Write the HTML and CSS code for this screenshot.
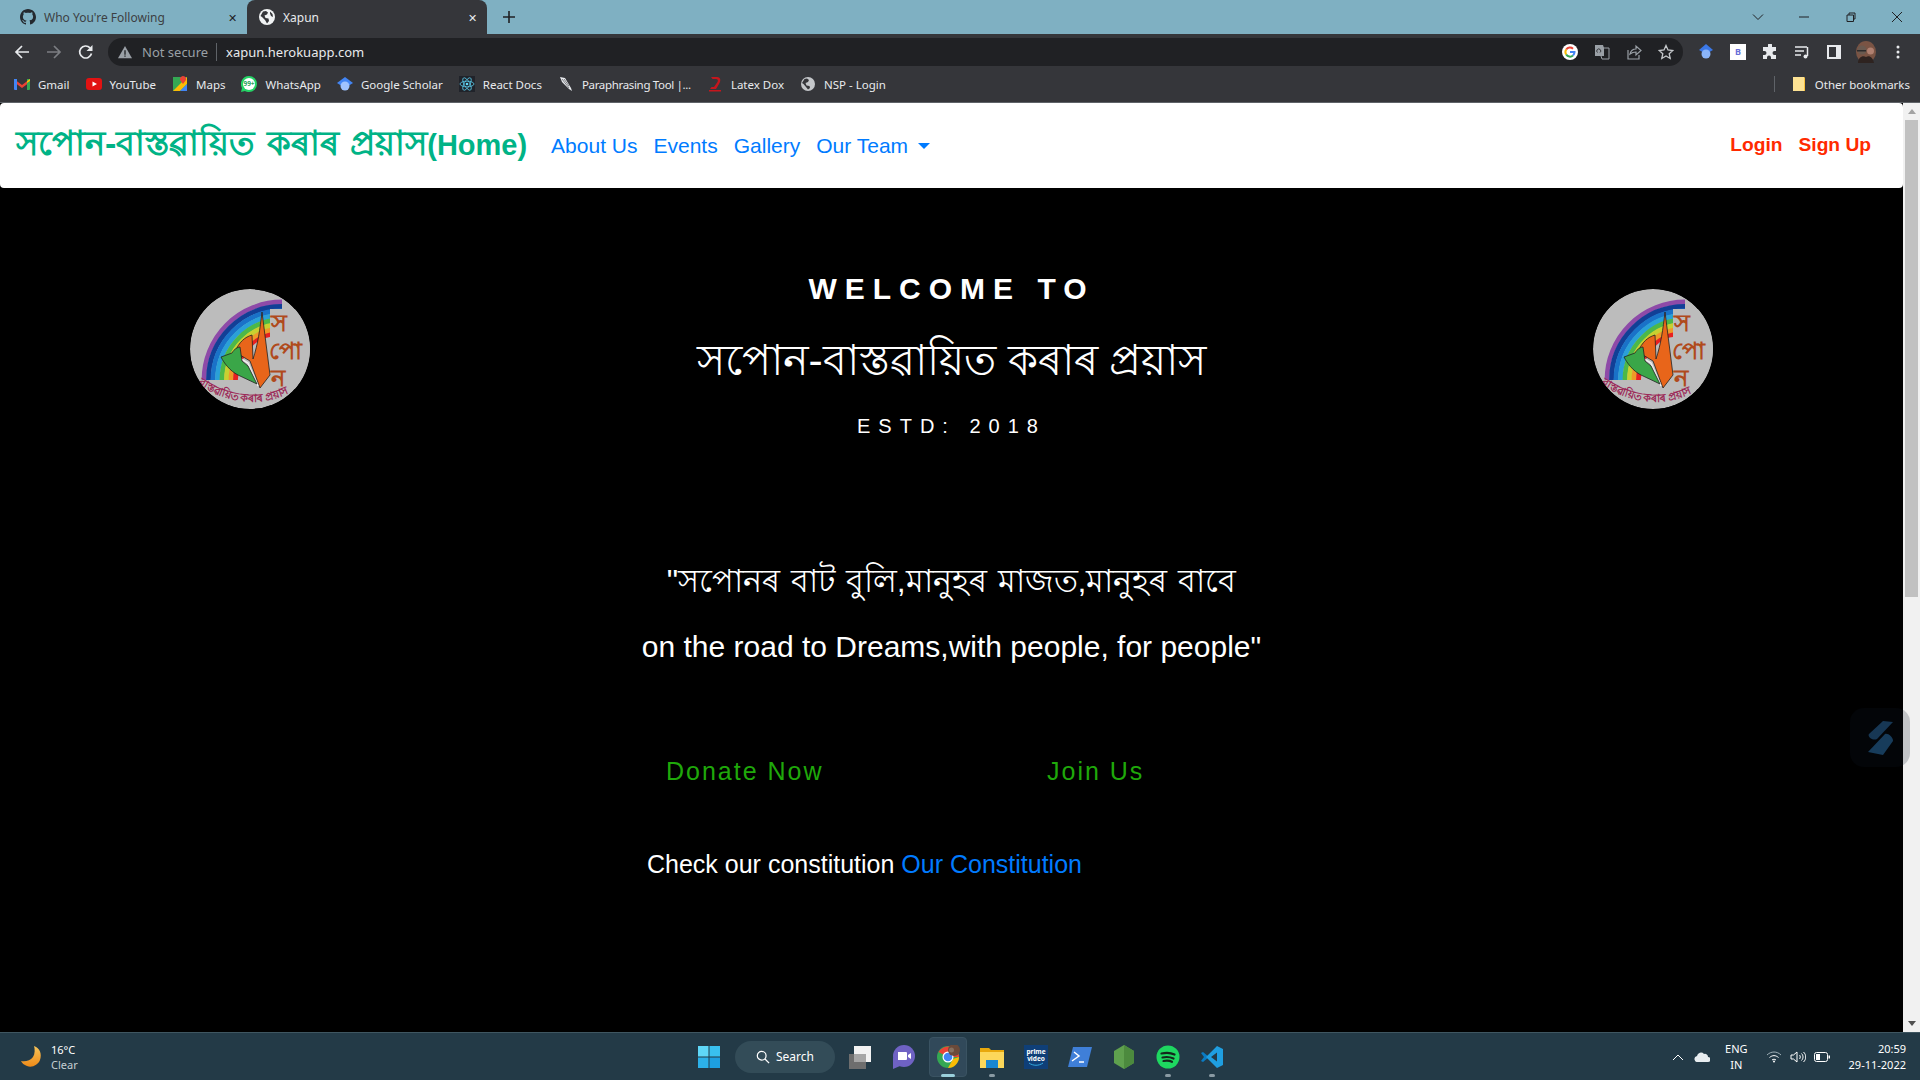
FILE: index.html
```html
<!DOCTYPE html>
<html lang="en">
<head>
  <meta charset="UTF-8">
  <title>Xapun</title>
  <link rel="stylesheet" href="styles.css">
</head>
<body>
  <!-- browser window -->
  <div class="tabstrip">
    <div class="tab">
      <svg class="tab-icon" viewBox="0 0 16 16"><path fill="#24292f" d="M8 0C3.600 0 0 3.600 0 8c0 3.500 2.300 6.500 5.500 7.600.4.100.5-.2.5-.4v-1.400c-2.200.5-2.700-1-2.700-1-.4-.9-.9-1.200-.9-1.200-.7-.5.100-.5.100-.5.800.1 1.200.8 1.200.8.700 1.200 1.900.9 2.300.7.100-.5.300-.9.500-1.100-1.800-.2-3.600-.9-3.600-4 0-.9.300-1.600.8-2.100-.1-.2-.4-1 .1-2.100 0 0 .7-.2 2.200.8.600-.2 1.300-.3 2-.3s1.400.1 2 .3c1.500-1 2.200-.8 2.200-.8.4 1.100.2 1.900.1 2.100.5.600.8 1.300.8 2.100 0 3.100-1.900 3.700-3.700 3.900.3.300.6.800.6 1.500v2.200c0 .2.100.5.600.4C13.700 14.500 16 11.500 16 8c0-4.400-3.600-8-8-8z"/></svg>
      <span class="tab-title">Who You're Following</span>
      <span class="tab-close">✕</span>
    </div>
    <div class="tab tab-active">
      <svg class="tab-icon" viewBox="0 0 16 16"><circle cx="8" cy="8" r="8" fill="#f1f3f4"/><path fill="#35363a" d="M4 2.500 7 2l2 1.500-1 2-2.500 1 1 2.500 3 .5.500 2.500L8 14.500 6 11 3 8 1.500 7zM11 2.500l2.500 2.500.5 3-2-1-1-2.500z"/></svg>
      <span class="tab-title">Xapun</span>
      <span class="tab-close">✕</span>
    </div>
    <svg class="new-tab" viewBox="0 0 12 12"><path stroke="#202124" stroke-width="1.600" d="M6 0v12M0 6h12"/></svg>
    <div class="window-btns">
      <svg viewBox="0 0 12 12"><path fill="none" stroke="#202124" d="M1 3.500l5 5 5-5"/></svg>
      <svg viewBox="0 0 12 12"><path stroke="#202124" d="M1 6h10"/></svg>
      <svg viewBox="0 0 12 12"><path fill="none" stroke="#202124" d="M2 4h6.500v6.500H2zM4 4V2h6v6H8.500"/></svg>
      <svg viewBox="0 0 12 12"><path stroke="#202124" d="M1 1l10 10M11 1L1 11"/></svg>
    </div>
  </div>

  <div class="toolbar">
    <svg class="tool-icon" viewBox="0 0 16 16"><path fill="none" stroke="#e8eaed" stroke-width="1.700" d="M15 8H2M8 2 2 8l6 6"/></svg>
    <svg class="tool-icon" viewBox="0 0 16 16"><path fill="none" stroke="#7c7e82" stroke-width="1.700" d="M1 8h13M8 2l6 6-6 6"/></svg>
    <svg class="tool-icon" viewBox="0 0 16 16"><path fill="none" stroke="#e8eaed" stroke-width="1.700" d="M13.500 9.500A6 6 0 1 1 12 3.800"/><path fill="#e8eaed" d="M14.500 1v6h-6z"/></svg>
    <div class="omnibox">
      <svg class="warn-icon" viewBox="0 0 16 16"><path fill="#9aa0a6" d="M8 1 16 15H0z"/><path stroke="#202124" stroke-width="1.500" d="M8 6v5M8 12v1.500"/></svg>
      <span class="not-secure">Not secure</span>
      <span class="url">xapun.herokuapp.com</span>
      <div class="omni-icons">
        <svg viewBox="0 0 16 16"><circle cx="8" cy="8" r="8" fill="#fff"/><path fill="none" stroke="#ea4335" stroke-width="2" d="M4.200 5.500A4.500 4.500 0 0 1 11 4.700"/><path fill="none" stroke="#fbbc05" stroke-width="2" d="M4.200 5.500a4.500 4.500 0 0 0 0 5"/><path fill="none" stroke="#34a853" stroke-width="2" d="M4.200 10.500A4.500 4.500 0 0 0 11 11.500"/><path fill="#4285f4" d="M8 7h5.500c.2 2-.5 3.700-1.800 5l-1.500-1.300c.6-.5 1-1 1.100-1.700H8z"/></svg>
        <svg viewBox="0 0 16 16"><path fill="#9aa0a6" d="M1 1h8l1 3v8H1z"/><path fill="none" stroke="#9aa0a6" d="M7 4h8v11H8l-1-3"/><path fill="none" stroke="#35363a" d="M3.500 8.500a2 2 0 1 1 2.500 0"/></svg>
        <svg viewBox="0 0 16 16"><path fill="none" stroke="#9aa0a6" stroke-width="1.200" d="M2 6v9h11v-4M4 10c1-4 4-5 6-5V2l5 4.500-5 4.500V8c-2 0-4 .5-6 2z"/></svg>
        <svg viewBox="0 0 16 16"><path fill="none" stroke="#c4c7ca" stroke-width="1.300" d="M8 1.500 10 6l4.800.5-3.600 3.200 1 4.800L8 12l-4.200 2.500 1-4.800L1.200 6.500 6 6z"/></svg>
      </div>
    </div>
    <div class="ext-icons">
      <svg viewBox="0 0 16 16"><path fill="#3b78e7" d="M8 0l7 6-7 4-7-4z"/><circle cx="8" cy="10" r="4.500" fill="#8ab4f8"/></svg>
      <div class="ext-b">B</div>
      <svg viewBox="0 0 16 16"><path fill="#e8eaed" d="M6 1a2 2 0 0 1 4 0v2h4v4h-1.500a2 2 0 0 0 0 4H14v4H9v-1.500a2 2 0 0 0-4 0V15H1v-4h1.500a2 2 0 0 0 0-4H1V3h5z"/></svg>
      <svg viewBox="0 0 16 16"><path stroke="#e8eaed" stroke-width="1.500" d="M1 3h12M1 7h9M1 11h6"/><path fill="none" stroke="#e8eaed" stroke-width="1.500" d="M13.500 3v9"/><circle cx="11.500" cy="12.500" r="2" fill="#e8eaed"/></svg>
      <svg viewBox="0 0 16 16"><path fill="#e8eaed" d="M1 1h14v14H1z"/><path fill="#35363a" d="M3 3h7v10H3z"/></svg>
      <svg class="avatar" viewBox="0 0 20 22"><ellipse cx="10" cy="11" rx="10" ry="11" fill="#7a5444"/><circle cx="6" cy="9" r="4.500" fill="#6a5a50"/><path fill="#2c2a2a" d="M1 9h9v1.500H1z"/><circle cx="14.500" cy="10" r="3.500" fill="#b08070"/><path fill="#2e2320" d="M2 22c0-6 5-8 8-6 3-2 7 0 8 6z"/></svg>
      <svg viewBox="0 0 16 16"><circle cx="8" cy="3" r="1.500" fill="#e8eaed"/><circle cx="8" cy="8" r="1.500" fill="#e8eaed"/><circle cx="8" cy="13" r="1.500" fill="#e8eaed"/></svg>
    </div>
  </div>

  <div class="bookmarks">
    <a class="bm"><svg viewBox="0 0 16 16"><path fill="#ea4335" d="M0 3l8 6 8-6v3l-8 6-8-6z"/><path fill="#4285f4" d="M0 3h3v11H1a1 1 0 0 1-1-1z"/><path fill="#34a853" d="M13 3h3v10a1 1 0 0 1-1 1h-2z"/><path fill="#fbbc05" d="M13 5l3-2v2l-3 2z"/></svg>Gmail</a>
    <a class="bm"><svg viewBox="0 0 16 16"><rect y="2" width="16" height="12" rx="3" fill="#e21212"/><path fill="#fff" d="M6.500 5.500 11 8l-4.500 2.500z"/></svg>YouTube</a>
    <a class="bm"><svg viewBox="0 0 16 16"><path fill="#34a853" d="M1 1h14v14H1z"/><path fill="#fbbc05" d="M1 15 15 1v7l-7 7z"/><path fill="#4285f4" d="M8 15l7-7v7z"/><path fill="#ea4335" d="M9 1a3 3 0 0 1 5 3l-3 4-3-4a3 3 0 0 1 1-3z"/></svg>Maps</a>
    <a class="bm"><svg viewBox="0 0 16 16"><path fill="#25d366" d="M8 0a8 8 0 0 1 0 16c-1.500 0-3-.4-4-1l-4 1 1-4A8 8 0 0 1 8 0z"/><circle cx="8" cy="8" r="6" fill="#fff"/><text class="wa-badge" x="8" y="10" text-anchor="middle">99+</text></svg>WhatsApp</a>
    <a class="bm"><svg viewBox="0 0 16 16"><path fill="#4285f4" d="M8 1l8 6-8 5-8-5z"/><circle cx="8" cy="10" r="4.500" fill="#a0c3ff"/></svg>Google Scholar</a>
    <a class="bm"><svg viewBox="0 0 16 16"><rect width="16" height="16" fill="#20232a"/><g fill="none" stroke="#61dafb" stroke-width=".7"><ellipse cx="8" cy="8" rx="7" ry="2.800"/><ellipse cx="8" cy="8" rx="7" ry="2.800" transform="rotate(60 8 8)"/><ellipse cx="8" cy="8" rx="7" ry="2.800" transform="rotate(120 8 8)"/></g><circle cx="8" cy="8" r="1.300" fill="#61dafb"/></svg>React Docs</a>
    <a class="bm bm-tight"><svg viewBox="0 0 16 16"><path fill="#e8eaed" d="M2 1l5 1 6 10 1 3-3-2L4 6z"/><path stroke="#35363a" stroke-width=".6" d="M4 3l7 9M6 3l5 7"/></svg>Paraphrasing Tool |...</a>
    <a class="bm"><svg viewBox="0 0 16 16"><path fill="#c5161d" d="M4 1h6c4 0 4 4 2 7l-3 5H3l1.500-2H7l3.500-5c1-2 0-3-1.500-3H5.500zM2 14h12v1.500H2z"/></svg>Latex Dox</a>
    <a class="bm"><svg viewBox="0 0 16 16"><circle cx="8" cy="8" r="7" fill="#c4c7ca"/><path fill="#35363a" d="M4.500 3 7 2.500l2 1.500-1 2-2.500 1 1 2.500 3 .5.500 2L8 13.500 6 11 3.500 8 2 7z"/></svg>NSP - Login</a>
    <span class="bm-sep"></span>
    <a class="bm"><svg viewBox="0 0 16 16"><path fill="#fde293" d="M2 1h11l1 1v13H2z"/><path fill="#f9ab00" d="M13 1l1 1v13h-1z" opacity=".6"/></svg>Other bookmarks</a>
  </div>

  <!-- page -->
  <div class="viewport">
    <div class="page">
      <nav class="navbar">
        <a class="brand">সপোন-বাস্তৱায়িত কৰাৰ প্ৰয়াস<span class="brand-home">(Home)</span></a>
        <a class="nav-link">About Us</a>
        <a class="nav-link">Events</a>
        <a class="nav-link">Gallery</a>
        <a class="nav-link">Our Team <span class="caret"></span></a>
        <div class="auth">
          <a class="auth-link">Login</a>
          <a class="auth-link">Sign Up</a>
        </div>
      </nav>

      <main class="hero">
        <svg class="logo" viewBox="0 0 120 120">
          <use href="#logo-art"/>
        </svg>
        <div class="hero-text">
          <h2 class="welcome">WELCOME TO</h2>
          <h1 class="org-name">সপোন-বাস্তৱায়িত কৰাৰ প্ৰয়াস</h1>
          <p class="estd">ESTD: 2018</p>
        </div>
        <svg class="logo" viewBox="0 0 120 120">
          <defs>
            <clipPath id="logo-clip"><circle cx="60" cy="60" r="60"/></clipPath>
            <path id="logo-curve" d="M8 95Q60 130 114 96"/>
            <g id="logo-art" clip-path="url(#logo-clip)">
              <circle cx="60" cy="60" r="60" fill="#bcbcbc"/>
              <g fill="none" stroke-width="4.800">
                <path stroke="#8e4aa8" d="M14 91A78 78 0 0 1 92 13"/>
                <path stroke="#123f96" d="M18.500 91A73.500 73.500 0 0 1 92 17.500"/>
                <path stroke="#1a72c8" d="M23 91A69 69 0 0 1 92 22"/>
                <path stroke="#2aa0d8" d="M27.500 91A64.500 64.500 0 0 1 92 26.500"/>
                <path stroke="#4cb848" d="M32 91A60 60 0 0 1 92 31"/>
                <path stroke="#c8d030" d="M36.500 91A55.500 55.500 0 0 1 92 35.500"/>
                <path stroke="#ee9a28" d="M41 91A51 51 0 0 1 92 40"/>
                <path stroke="#e82020" d="M45.500 91A46.500 46.500 0 0 1 92 44.500"/>
              </g>
              <path fill="#bcbcbc" d="M80 20h40v80H80z"/>
              <path fill="#bcbcbc" d="M50 91C50 70 62 50 80 48V91z"/>
              <path fill="#e8651a" stroke="#222" stroke-width=".8" d="M72 23 80 86 70 99 60 72 45 63C49 53 55 48 62 46L63 70C68 55 70 40 72 23z"/>
              <path fill="none" stroke="#eee" stroke-width="1.500" d="M43 65 58 74 68 97"/>
              <path fill="#3aa648" stroke="#222" stroke-width=".8" d="M31 68 42 64C44 60 48 58 50 58L52 72 58 77 67 95 48 86C40 82 34 74 31 68z"/>
              <text class="logo-letters" x="81" y="42">স</text>
              <text class="logo-letters" x="79" y="70">পো</text>
              <text class="logo-letters" x="81" y="97">ন</text>
              <text class="logo-caption"><textPath href="#logo-curve">বাস্তৱায়িত কৰাৰ প্ৰয়াস</textPath></text>
            </g>
          </defs>
          <use href="#logo-art"/>
        </svg>
      </main>

      <section class="motto">
        <p class="motto-as">"সপোনৰ বাট বুলি,মানুহৰ মাজত,মানুহৰ বাবে</p>
        <p class="motto-en">on the road to Dreams,with people, for people"</p>
      </section>

      <div class="actions">
        <a class="action action-donate">Donate Now</a>
        <a class="action">Join Us</a>
      </div>

      <p class="constitution">Check our constitution <a class="const-link">Our Constitution</a></p>
    </div>

    <div class="scrollbar">
      <span class="arrow-up"></span>
      <div class="thumb"></div>
      <span class="arrow-down"></span>
    </div>

    <div class="float-btn">
      <svg viewBox="0 0 30 38"><path fill="#1c4468" d="M18 2 28 3 12 20C8 22 2 18 4 15z"/><path fill="#1d4a70" d="M20 15C23 14 28 18 28 22L18 36 3 33z"/></svg>
    </div>
  </div>

  <!-- windows taskbar -->
  <footer class="taskbar">
    <div class="weather">
      <svg viewBox="0 0 24 24"><defs><linearGradient id="moon" x1="0" y1="0" x2="0" y2="1"><stop offset="0" stop-color="#f8c55a"/><stop offset="1" stop-color="#ee8a18"/></linearGradient></defs><path fill="url(#moon)" d="M15 1c6 2 8 8 6 14-2 5-8 8-13 6-3-1-5-3-6-5 4 1 9 0 12-4 2-3 2-8 1-11z"/></svg>
      <div class="weather-text"><span class="temp">16°C</span><span class="cond">Clear</span></div>
    </div>
    <div class="task-center">
      <svg class="task-icon" viewBox="0 0 24 24"><path fill="#5fd7f7" d="M1 1h10.500v10.500H1z"/><path fill="#39c0ef" d="M12.500 1H23v10.500H12.500z"/><path fill="#2cb0e8" d="M1 12.500h10.500V23H1z"/><path fill="#1d9fe0" d="M12.500 12.500H23V23H12.500z"/></svg>
      <div class="search-pill">
        <svg viewBox="0 0 16 16"><circle cx="6.500" cy="6.500" r="5" fill="none" stroke="#fff" stroke-width="1.400"/><path stroke="#fff" stroke-width="1.500" d="M10 10l5 5"/></svg>Search
      </div>
      <svg class="task-icon" viewBox="0 0 24 24"><path fill="#6e6e6e" d="M1 9h17v15H1z"/><path fill="#f2f2f2" d="M6 1h17v16H6z"/><path fill="#a6a6a6" d="M6 9h12v8H6z"/></svg>
      <svg class="task-icon" viewBox="0 0 24 24"><circle cx="12" cy="11" r="11" fill="#6f62c4"/><path fill="#6f62c4" d="M1 12v12l7-3z"/><path fill="#fff" d="M6 7h8a1 1 0 0 1 1 1v6a1 1 0 0 1-1 1H6zM16 10l3-2v6l-3-2z"/></svg>
      <div class="task-active">
        <svg class="task-icon" viewBox="0 0 24 24"><circle cx="12" cy="12" r="11" fill="#34a853"/><path fill="#ea4335" d="M2.500 7A11 11 0 0 1 23 12H12z"/><path fill="#fbbc05" d="M23 12a11 11 0 0 1-11 11l5-9z"/><circle cx="12" cy="12" r="5.500" fill="#fff"/><circle cx="12" cy="12" r="4.300" fill="#4285f4"/><circle cx="18" cy="5" r="6" fill="#6b4a3a"/><circle cx="15.500" cy="5" r="2.500" fill="#857060"/></svg>
        <span class="task-bar task-bar-wide"></span>
      </div>
      <div class="task-item">
        <svg class="task-icon" viewBox="0 0 24 24"><path fill="#e8a80c" d="M0 3h9l2 2h13v18H0z"/><path fill="#fcd75a" d="M0 7h24v16H0z"/><path fill="#1a86d0" d="M6 15h12v8H6z"/></svg>
        <span class="task-bar"></span>
      </div>
      <svg class="task-icon" viewBox="0 0 24 24"><rect width="24" height="24" fill="#0f3f78"/><text class="prime" x="12" y="9" text-anchor="middle">prime</text><text class="prime" x="12" y="15.500" text-anchor="middle">video</text><path fill="none" stroke="#33a9e0" d="M5 18c4 3 10 3 14 0"/></svg>
      <svg class="task-icon" viewBox="0 0 24 24"><path fill="#3f7fd8" d="M5 2h19l-5 20H0z"/><path fill="none" stroke="#fff" stroke-width="1.500" d="M6 7l5 4-7 5M11 17h5"/></svg>
      <svg class="task-icon" viewBox="0 0 24 24"><path fill="#5fa04e" d="M12 0l10 6v12l-10 6-10-6V6z"/><path fill="#4c8a3e" d="M12 0l10 6v12l-10 6z"/></svg>
      <div class="task-item">
        <svg class="task-icon" viewBox="0 0 24 24"><circle cx="12" cy="12" r="11.500" fill="#1ed760"/><path fill="none" stroke="#14271c" stroke-width="2.200" stroke-linecap="round" d="M5.500 8.500c4-1 9-1 13 1M6.500 12.500c3.500-.8 7.500-.6 11 1M7.500 16c3-.6 6-.5 8.500.8"/></svg>
        <span class="task-bar"></span>
      </div>
      <div class="task-item">
        <svg class="task-icon" viewBox="0 0 24 24"><path fill="#0a7cc4" d="M1 8l2-1 6 5-6 5-2-1 3-4z"/><path fill="#1f9ee0" d="M17 1l6 3v16l-6 3-11-11zM17 7.500 11 12l6 4.500z"/></svg>
        <span class="task-bar"></span>
      </div>
    </div>
    <div class="tray">
      <svg class="tray-chevron" viewBox="0 0 12 8"><path fill="none" stroke="#fff" d="M1 7l5-5 5 5"/></svg>
      <svg class="tray-cloud" viewBox="0 0 16 10"><path fill="#e8edf0" d="M4 10a3 3 0 0 1-1-6 4 4 0 0 1 7-2 3 3 0 0 1 4 3 2.500 2.500 0 0 1 0 5z"/></svg>
      <div class="lang"><span>ENG</span><span>IN</span></div>
      <svg class="tray-sys" viewBox="0 0 16 12"><path fill="none" stroke="#9fb0b8" d="M1 4c4-4 10-4 14 0"/><path fill="none" stroke="#fff" d="M3.500 6.500c3-2.500 6-2.500 9 0M6 9c1.500-1 2.500-1 4 0"/><circle cx="8" cy="10.500" r="1" fill="#fff"/></svg>
      <svg class="tray-sys" viewBox="0 0 16 12"><path fill="none" stroke="#fff" d="M1 4h2.500L7 1v10L3.500 8H1zM9.500 4c1 1 1 3 0 4M11.500 2.500c2 2 2 5 0 7M13.500 1c3 3 3 7 0 10"/></svg>
      <svg class="tray-sys" viewBox="0 0 16 12"><rect x=".5" y="1.500" width="13" height="9" rx="2" fill="none" stroke="#fff"/><path fill="#fff" d="M2 3h4v6H2zM14.500 4.500H16v3h-1.500z"/></svg>
      <div class="clock"><span>20:59</span><span>29-11-2022</span></div>
    </div>
  </footer>
</body>
</html>
```

FILE: styles.css
```css
* {
  box-sizing: border-box;
}
html, body {
  margin: 0;
  height: 1080px;
  overflow: hidden;
}
body {
  display: flex;
  flex-direction: column;
  font-family: "Liberation Sans", Arial, sans-serif;
  background-color: #000;
}
p, h1, h2 {
  margin: 0;
  font-weight: normal;
}

/* browser chrome */
.tabstrip {
  height: 34px;
  flex: none;
  display: flex;
  align-items: flex-end;
  padding-left: 8px;
  background-color: #7fb0c2;
  font-family: "Noto Sans", sans-serif;
  font-size: 12px;
}
.tab {
  width: 240px;
  height: 34px;
  display: flex;
  align-items: center;
  padding: 0 11px 0 12px;
  color: #3c4043;
}
.tab-active {
  margin-left: -1px;
  padding: 0 10px 0 12px;
  border-radius: 8px 8px 0 0;
  background-color: #35363a;
  color: #e8eaed;
}
.tab-icon {
  width: 16px;
  height: 16px;
  margin-right: 8px;
}
.tab-title {
  flex: 1;
}
.tab-close {
  font-size: 11px;
  color: #202124;
}
.tab-active .tab-close {
  color: #e8eaed;
}
.new-tab {
  width: 12px;
  height: 12px;
  margin: 0 0 11px 16px;
}
.window-btns {
  margin-left: auto;
  height: 34px;
  display: flex;
  align-items: center;
  gap: 34.500px;
  padding-right: 17px;
}
.window-btns svg {
  width: 12px;
  height: 12px;
}
.toolbar {
  height: 34px;
  flex: none;
  display: flex;
  align-items: center;
  gap: 16px;
  padding: 2px 0 0 14px;
  background-color: #35363a;
  font-family: "Noto Sans", sans-serif;
  font-size: 13px;
}
.tool-icon {
  width: 16px;
  height: 16px;
}
.omnibox {
  width: 1575px;
  height: 28px;
  display: flex;
  align-items: center;
  margin-left: -2px;
  padding: 0 9px 0 10px;
  border-radius: 14px;
  background-color: #202124;
}
.warn-icon {
  width: 14px;
  height: 14px;
  margin-right: 10px;
}
.not-secure {
  padding-right: 8px;
  border-right: 1px solid #5f6368;
  color: #9aa0a6;
}
.url {
  padding-left: 9px;
  color: #e8eaed;
}
.omni-icons {
  margin-left: auto;
  display: flex;
  gap: 16px;
}
.omni-icons svg {
  width: 16px;
  height: 16px;
}
.ext-icons {
  display: flex;
  align-items: center;
  gap: 16px;
  margin-left: -1px;
}
.ext-icons svg {
  width: 16px;
  height: 16px;
}
.ext-b {
  width: 16px;
  height: 16px;
  background-color: #fff;
  color: #6a6fd8;
  font-size: 9px;
  font-weight: bold;
  line-height: 16px;
  text-align: center;
}
.ext-icons .avatar {
  width: 20px;
  height: 22px;
  margin: 0 -2px;
}
.bookmarks {
  height: 35px;
  flex: none;
  display: flex;
  align-items: center;
  gap: 16px;
  padding: 0 10px 2px 14px;
  background-color: #35363a;
  border-bottom: 1px solid #5f6368;
  color: #e8eaed;
  font-family: "Noto Sans", sans-serif;
  font-size: 11.500px;
}
.bm {
  display: flex;
  align-items: center;
  gap: 8px;
  white-space: nowrap;
}
.bm svg {
  width: 16px;
  height: 16px;
}
.bm-tight {
  letter-spacing: -0.33px;
}
.wa-badge {
  font-size: 6.500px;
  font-weight: bold;
  fill: #25a35a;
}
.bm-sep {
  width: 1px;
  height: 16px;
  margin-left: auto;
  background-color: #5f6368;
}

/* page */
.viewport {
  flex: 1;
  min-height: 0;
  position: relative;
  display: flex;
}
.page {
  flex: 1;
  min-width: 0;
  display: flex;
  flex-direction: column;
  background-color: #000;
  color: #fff;
}
.navbar {
  height: 85px;
  flex: none;
  display: flex;
  align-items: center;
  padding: 0 32px 0 16px;
  border-radius: 4px;
  background-color: #fff;
}
.brand {
  margin-right: 16px;
  color: #00b386;
  font-size: 34px;
  font-weight: bold;
  word-spacing: 2px;
  white-space: nowrap;
}
.brand-home {
  font-size: 29px;
}
.nav-link {
  margin-top: 1px;
  padding: 0 8px;
  color: #007bff;
  font-size: 21px;
}
.caret {
  display: inline-block;
  margin-left: 4px;
  vertical-align: 4px;
  border-top: 6px solid #007bff;
  border-left: 6px solid transparent;
  border-right: 6px solid transparent;
}
.auth {
  margin: 0 0 2px auto;
  display: flex;
  gap: 16px;
}
.auth-link {
  color: #ff2a00;
  font-size: 19.200px;
  font-weight: bold;
}
.hero {
  display: flex;
  justify-content: space-between;
  padding: 101px 190px 0;
}
.logo {
  width: 120px;
  height: 120px;
  flex: none;
}
.logo-letters {
  fill: #b04a1c;
  font-size: 24px;
  font-weight: bold;
  font-family: "Noto Sans", sans-serif;
}
.logo-caption {
  fill: #9c2a58;
  font-size: 11px;
  font-weight: bold;
  font-family: "Noto Sans", sans-serif;
}
.hero-text {
  flex: 1;
  margin-top: -22px;
  text-align: center;
}
.welcome {
  font-size: 30px;
  font-weight: bold;
  line-height: 44px;
  letter-spacing: 8px;
}
.org-name {
  margin-top: 20px;
  font-size: 42.500px;
  line-height: 60px;
}
.estd {
  margin-top: 21px;
  font-size: 20px;
  line-height: 28px;
  letter-spacing: 8px;
}
.motto {
  margin-top: 119px;
  text-align: center;
}
.motto-as {
  font-size: 32px;
  line-height: 44px;
  word-spacing: 2px;
}
.motto-en {
  margin-top: 22px;
  font-size: 30px;
  line-height: 44px;
}
.actions {
  display: flex;
  margin-top: 88px;
  padding-left: 666px;
  color: #1fa80a;
  font-size: 25px;
  letter-spacing: 2px;
}
.action-donate {
  width: 381px;
}
.constitution {
  margin-top: 64px;
  padding-left: 647px;
  font-size: 25px;
}
.const-link {
  color: #007bff;
}
.scrollbar {
  width: 17px;
  flex: none;
  display: flex;
  flex-direction: column;
  align-items: center;
  background-color: #f1f1f1;
}
.arrow-up, .arrow-down {
  margin: 6px 0;
  border-left: 4px solid transparent;
  border-right: 4px solid transparent;
}
.arrow-up {
  border-bottom: 5px solid #a3a3a3;
}
.arrow-down {
  margin-top: auto;
  border-top: 5px solid #505050;
}
.thumb {
  flex: none;
  width: 13px;
  height: 477px;
  background-color: #c1c1c1;
}
.float-btn {
  position: absolute;
  top: 605px;
  right: 10px;
  width: 60px;
  height: 59px;
  display: flex;
  align-items: center;
  justify-content: center;
  border-radius: 14px;
  background-color: rgba(16, 24, 40, 0.2);
}
.float-btn svg {
  width: 30px;
  height: 38px;
  opacity: 0.8;
}

/* taskbar */
.taskbar {
  height: 48px;
  flex: none;
  position: relative;
  display: flex;
  align-items: center;
  justify-content: space-between;
  border-top: 1px solid #3f5661;
  background-color: #233a47;
  color: #fff;
  font-family: "Noto Sans", sans-serif;
  font-size: 12px;
}
.weather {
  display: flex;
  align-items: center;
  gap: 8px;
  padding-left: 19px;
  font-size: 11px;
}
.weather svg {
  width: 24px;
  height: 24px;
}
.weather-text, .lang, .clock {
  display: flex;
  flex-direction: column;
}
.cond {
  color: #c5ced3;
}
.task-center {
  position: absolute;
  left: 697px;
  top: 0;
  height: 47px;
  display: flex;
  align-items: center;
  gap: 20px;
}
.task-icon {
  width: 24px;
  height: 24px;
  display: block;
}
.search-pill {
  width: 100px;
  height: 32px;
  display: flex;
  align-items: center;
  justify-content: center;
  gap: 6px;
  margin: 0 -7px 0 -6px;
  border-radius: 16px;
  background-color: #334c58;
}
.search-pill svg {
  width: 14px;
  height: 14px;
}
.task-item, .task-active {
  position: relative;
}
.task-active::before {
  content: "";
  position: absolute;
  inset: -8px -7px;
  border: 1px solid #3a5362;
  border-radius: 4px;
  background-color: #31495a;
}
.task-active .task-icon {
  position: relative;
}
.task-bar {
  position: absolute;
  left: 9px;
  bottom: -8px;
  width: 6px;
  height: 3px;
  border-radius: 2px;
  background-color: #8a9aa3;
}
.task-bar-wide {
  left: 5px;
  width: 14px;
  background-color: #9ad0dc;
}
.prime {
  fill: #fff;
  font-size: 6.500px;
  font-weight: bold;
}
.tray {
  display: flex;
  align-items: center;
  padding-right: 14px;
}
.tray-chevron {
  width: 12px;
  height: 8px;
  margin-right: 10px;
}
.tray-cloud {
  width: 16px;
  height: 10px;
  margin-right: 15px;
}
.lang {
  align-items: center;
  margin-right: 18px;
  font-size: 11px;
  line-height: 16px;
}
.tray-sys {
  width: 16px;
  height: 12px;
  margin-right: 8px;
}
.clock {
  align-items: flex-end;
  margin-left: 11px;
  font-size: 11px;
  line-height: 16px;
}
```
